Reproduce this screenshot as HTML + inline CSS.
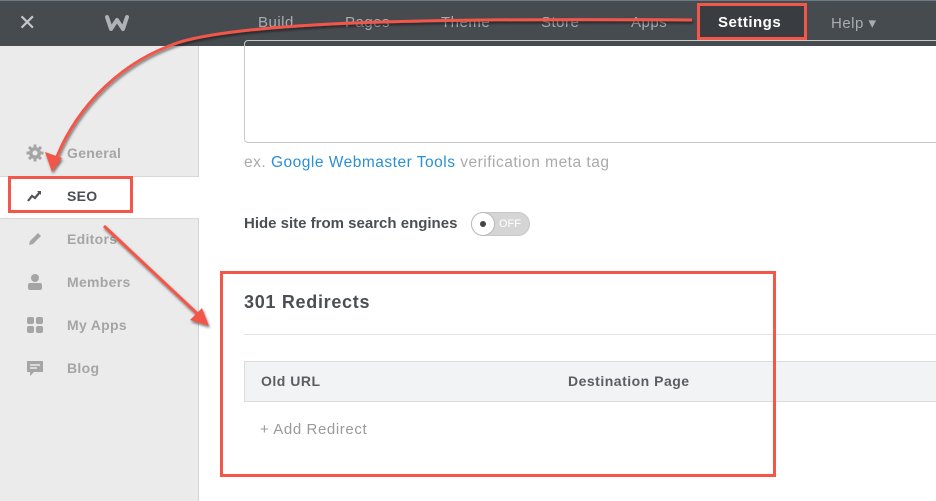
<!DOCTYPE html>
<html><head><meta charset="utf-8"><style>
*{margin:0;padding:0;box-sizing:border-box}
body{width:936px;height:501px;overflow:hidden;position:relative;background:#fff;font-family:"Liberation Sans",sans-serif;}
.top{position:absolute;left:0;top:0;width:936px;height:46px;background:#464b50;border-top:1px solid #6b7a85}
.nav{position:absolute;top:13px;font-size:15px;color:#a9adb0;letter-spacing:.5px}
.side{position:absolute;left:0;top:46px;width:199px;height:455px;background:#ebebeb;border-right:1px solid #d4d4d4}
.item{position:absolute;left:67px;font-size:14px;font-weight:bold;color:#a5a5a5;letter-spacing:.3px}
.ic{position:absolute;left:26px;width:18px;height:18px}
.abs{position:absolute}
.red{position:absolute;border:3px solid #f2574a}
</style></head><body>
<div class="top">
<div class="abs" style="left:18px;top:9px;color:#c6c9cb;font-size:22px">✕</div>
<svg class="abs" style="left:104px;top:12px" width="26" height="20" viewBox="0 0 26 20"><path d="M3 4 L7 16 L13 7 L19 16 L23 4" fill="none" stroke="#b0b3b5" stroke-width="4" stroke-linejoin="round" stroke-linecap="round"/></svg>
<div class="nav" style="left:258px">Build</div>
<div class="nav" style="left:345px">Pages</div>
<div class="nav" style="left:441px">Theme</div>
<div class="nav" style="left:541px">Store</div>
<div class="nav" style="left:631px">Apps</div>
<div class="abs" style="left:699px;top:3px;width:107px;height:36px;background:#393d41"></div>
<div class="nav" style="left:718px;color:#fff;font-weight:bold">Settings</div>
<div class="nav" style="left:831px">Help ▾</div>
</div>
<div class="side">
<div class="abs" style="left:0;top:130px;width:199px;height:43px;background:#fff;border-top:1px solid #d8d8d8;border-bottom:1px solid #d8d8d8"></div>
</div>
<svg class="ic" style="top:144px" viewBox="0 0 18 18"><g fill="#a5a5a5"><circle cx="9" cy="9" r="6"/><rect x="7.5" y="0.5" width="3" height="17"/><rect x="0.5" y="7.5" width="17" height="3"/><rect x="7.5" y="0.5" width="3" height="17" transform="rotate(45 9 9)"/><rect x="7.5" y="0.5" width="3" height="17" transform="rotate(-45 9 9)"/></g><circle cx="9" cy="9" r="2.5" fill="#ebebeb"/></svg>
<div class="item" style="top:145px">General</div>
<svg class="ic" style="top:187px" viewBox="0 0 18 18"><path d="M2 14 L6 9 L9 11 L14 5" fill="none" stroke="#555" stroke-width="2.2"/><path d="M11 4 L15 4 L15 8Z" fill="#555"/></svg>
<div class="item" style="top:188px;color:#4b4f54">SEO</div>
<svg class="ic" style="top:230px" viewBox="0 0 18 18"><path d="M3 15 L4 11 L12 3 L15 6 L7 14Z" fill="#a5a5a5"/></svg>
<div class="item" style="top:231px">Editors</div>
<svg class="ic" style="top:273px" viewBox="0 0 18 18"><circle cx="9" cy="5" r="4" fill="#a5a5a5"/><rect x="2" y="10" width="14" height="7" rx="2" fill="#a5a5a5"/></svg>
<div class="item" style="top:274px">Members</div>
<svg class="ic" style="top:316px" viewBox="0 0 18 18"><rect x="1" y="1" width="7" height="7" rx="2" fill="#a5a5a5"/><rect x="10" y="1" width="7" height="7" rx="2" fill="#a5a5a5"/><rect x="1" y="10" width="7" height="7" rx="2" fill="#a5a5a5"/><rect x="10" y="10" width="7" height="7" rx="2" fill="#a5a5a5"/></svg>
<div class="item" style="top:317px">My Apps</div>
<svg class="ic" style="top:359px" viewBox="0 0 18 18"><path d="M1 2 H17 V13 H8 L4 17 V13 H1Z" fill="#a5a5a5"/><path d="M4 6H14M4 9H11" stroke="#ebebeb" stroke-width="1.5"/></svg>
<div class="item" style="top:360px">Blog</div>

<div class="abs" style="left:244px;top:40px;width:700px;height:103px;border:1px solid #c9c9c9;border-radius:4px"></div>
<div class="abs" style="left:244px;top:154px;font-size:15.5px;color:#aaa;letter-spacing:.5px">ex. <span style="color:#2a8fd8">Google Webmaster Tools</span> verification meta tag</div>
<div class="abs" style="left:244px;top:215px;font-size:15px;font-weight:bold;color:#4b4f54">Hide site from search engines</div>
<div class="abs" style="left:471px;top:212px;width:59px;height:24px;border-radius:12px;background:#d5d5d5;border:1px solid #c8c8c8"></div>
<div class="abs" style="left:471px;top:212px;width:24px;height:24px;border-radius:12px;background:#fff;border:1px solid #bbb"></div>
<div class="abs" style="left:480px;top:221px;width:6px;height:6px;border-radius:3px;background:#444"></div>
<div class="abs" style="left:499px;top:218px;font-size:11px;color:#fff">OFF</div>
<div class="abs" style="left:244px;top:292px;font-size:18px;font-weight:bold;color:#4b4f54;letter-spacing:.7px">301 Redirects</div>
<div class="abs" style="left:244px;top:334px;width:692px;height:1px;background:#e3e3e3"></div>
<div class="abs" style="left:244px;top:361px;width:700px;height:41px;background:#f2f3f4;border:1px solid #dcdcdc"></div>
<div class="abs" style="left:261px;top:373px;font-size:14px;font-weight:bold;color:#5a5e63;letter-spacing:.5px">Old URL</div>
<div class="abs" style="left:568px;top:373px;font-size:14px;font-weight:bold;color:#5a5e63;letter-spacing:.5px">Destination Page</div>
<div class="abs" style="left:260px;top:421px;font-size:15px;color:#9a9a9a;letter-spacing:.6px">+ Add Redirect</div>

<div class="red" style="left:697px;top:3px;width:110px;height:37px"></div>
<div class="red" style="left:8px;top:176px;width:125px;height:37px"></div>
<div class="red" style="left:220px;top:271px;width:556px;height:206px"></div>
<svg class="abs" style="left:0;top:0" width="936" height="501">
<defs><filter id="s"><feDropShadow dx="1" dy="2" stdDeviation="1.2" flood-opacity=".5"/></filter></defs>
<g filter="url(#s)" stroke="#f2574a" stroke-width="3" fill="none">
<path d="M692 20 C420 18 250 22 180 42 C110 65 70 120 55 162"/>
<path d="M104 226 L204 320"/>
</g>
<g filter="url(#s)" fill="#f2574a">
<path d="M52 172 L45 152 L62 158Z"/>
<path d="M209 326 L190 320 L202 308Z"/>
</g>
</svg>
</body></html>
